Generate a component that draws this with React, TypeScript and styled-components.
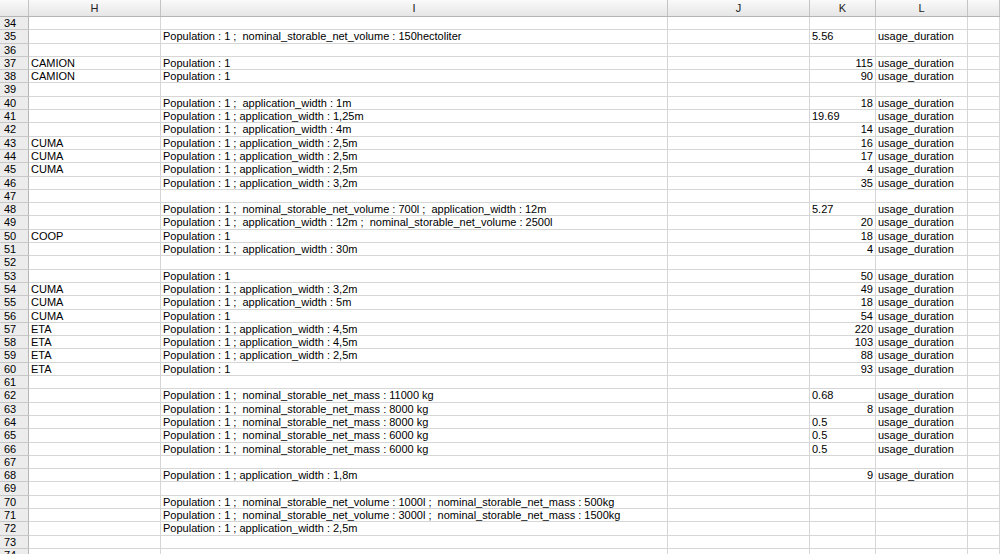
import styled, { createGlobalStyle } from "styled-components";

const Global = createGlobalStyle`
  html, body { margin: 0; padding: 0; background: #fff; overflow: hidden; }
  body { font-family: "Liberation Sans", Arial, sans-serif; font-size: 11px; color: #000; }
`;

const COLS = "29px 132px 507px 142px 66px 92px 32px";
const ROW_H = 13.3;

const Sheet = styled.div`
  width: 1000px;
  height: 554px;
  overflow: hidden;
`;

const HeaderRow = styled.div`
  display: grid;
  grid-template-columns: ${COLS};
  height: 17px;
  background: linear-gradient(#fafafa, #e6e6e6);
  border-bottom: 1px solid #b5b5b5;
  box-sizing: border-box;
`;

const HeadCell = styled.div`
  border-right: 1px solid #c4c4c4;
  display: flex;
  align-items: center;
  justify-content: center;
  font-size: 11px;
  color: #222;
`;

const Row = styled.div`
  display: grid;
  grid-template-columns: ${COLS};
  height: ${ROW_H}px;
`;

const NumCell = styled.div`
  background: #ececec;
  border-right: 1px solid #b5b5b5;
  border-bottom: 1px solid #c8c8c8;
  padding-left: 4px;
  line-height: ${ROW_H}px;
  overflow: hidden;
`;

const Cell = styled.div<{ $right?: boolean }>`
  border-right: 1px solid #d6d6d6;
  border-bottom: 1px solid #d6d6d6;
  padding: 0 2px;
  line-height: ${ROW_H - 1}px;
  white-space: pre;
  overflow: hidden;
  text-align: ${(p) => (p.$right ? "right" : "left")};
`;

type R = [string, string, string, string];
const P = "Population : 1";
const data: Record<number, R> = {
  35: ["", `${P} ;  nominal_storable_net_volume : 150hectoliter`, "5.56", "L"],
  37: ["CAMION", P, "115", ""],
  38: ["CAMION", P, "90", ""],
  40: ["", `${P} ;  application_width : 1m`, "18", ""],
  41: ["", `${P} ; application_width : 1,25m`, "19.69", "L"],
  42: ["", `${P} ;  application_width : 4m`, "14", ""],
  43: ["CUMA", `${P} ; application_width : 2,5m`, "16", ""],
  44: ["CUMA", `${P} ; application_width : 2,5m`, "17", ""],
  45: ["CUMA", `${P} ; application_width : 2,5m`, "4", ""],
  46: ["", `${P} ; application_width : 3,2m`, "35", ""],
  48: ["", `${P} ;  nominal_storable_net_volume : 700l ;  application_width : 12m`, "5.27", "L"],
  49: ["", `${P} ;  application_width : 12m ;  nominal_storable_net_volume : 2500l`, "20", ""],
  50: ["COOP", P, "18", ""],
  51: ["", `${P} ;  application_width : 30m`, "4", ""],
  53: ["", P, "50", ""],
  54: ["CUMA", `${P} ; application_width : 3,2m`, "49", ""],
  55: ["CUMA", `${P} ;  application_width : 5m`, "18", ""],
  56: ["CUMA", P, "54", ""],
  57: ["ETA", `${P} ; application_width : 4,5m`, "220", ""],
  58: ["ETA", `${P} ; application_width : 4,5m`, "103", ""],
  59: ["ETA", `${P} ; application_width : 2,5m`, "88", ""],
  60: ["ETA", P, "93", ""],
  62: ["", `${P} ;  nominal_storable_net_mass : 11000 kg`, "0.68", "L"],
  63: ["", `${P} ;  nominal_storable_net_mass : 8000 kg`, "8", ""],
  64: ["", `${P} ;  nominal_storable_net_mass : 8000 kg`, "0.5", "L"],
  65: ["", `${P} ;  nominal_storable_net_mass : 6000 kg`, "0.5", "L"],
  66: ["", `${P} ;  nominal_storable_net_mass : 6000 kg`, "0.5", "L"],
  68: ["", `${P} ; application_width : 1,8m`, "9", ""],
  70: ["", `${P} ;  nominal_storable_net_volume : 1000l ;  nominal_storable_net_mass : 500kg`, "", ""],
  71: ["", `${P} ;  nominal_storable_net_volume : 3000l ;  nominal_storable_net_mass : 1500kg`, "", ""],
  72: ["", `${P} ; application_width : 2,5m`, "", ""],
};

export default function App() {
  const rows = [];
  for (let n = 34; n <= 74; n++) rows.push(n);
  return (
    <Sheet>
      <Global />
      <HeaderRow>
        {["", "H", "I", "J", "K", "L", ""].map((h, i) => (
          <HeadCell key={i}>{h}</HeadCell>
        ))}
      </HeaderRow>
      {rows.map((n) => {
        const d = data[n];
        return (
          <Row key={n}>
            <NumCell>{n}</NumCell>
            <Cell>{d?.[0]}</Cell>
            <Cell>{d?.[1]}</Cell>
            <Cell />
            <Cell $right={d ? d[3] !== "L" : false}>{d?.[2]}</Cell>
            <Cell>{d && d[2] && n < 70 ? "usage_duration" : ""}</Cell>
            <Cell />
          </Row>
        );
      })}
    </Sheet>
  );
}
